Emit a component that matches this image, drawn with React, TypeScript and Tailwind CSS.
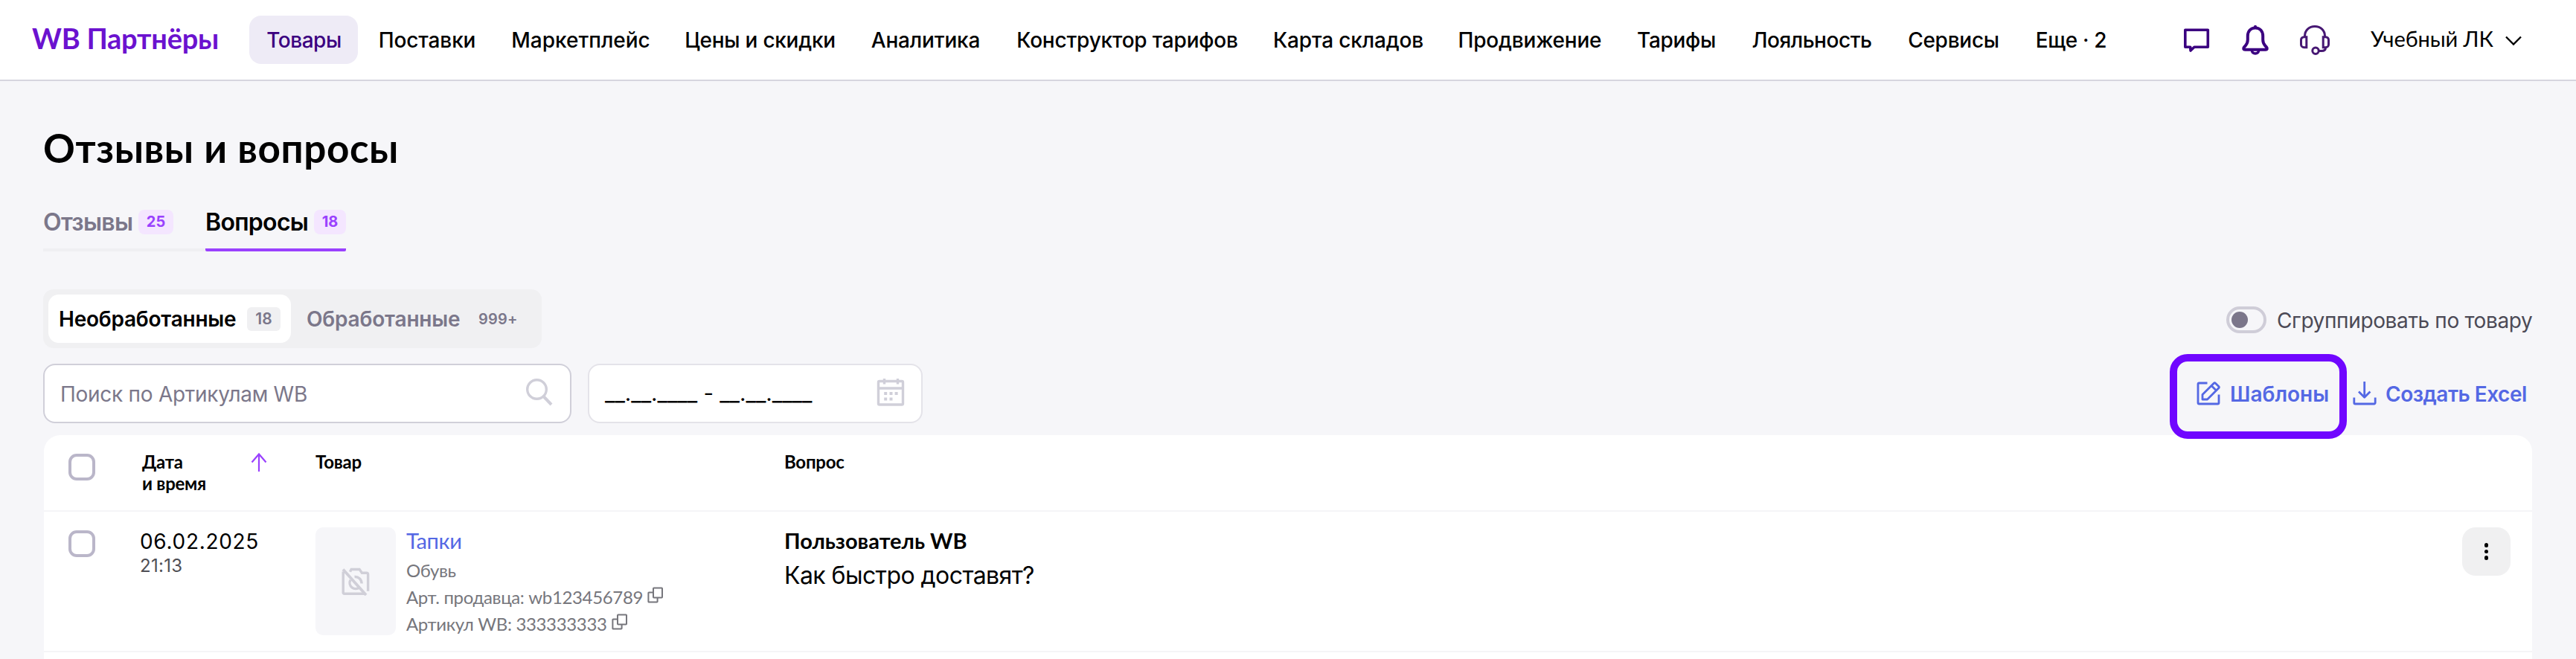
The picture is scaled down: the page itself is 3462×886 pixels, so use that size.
import React from 'react';
import clsx from 'clsx';

const NAV_ITEMS = [
  { label: 'Товары', width: 'w-[146px]', tracking: 'tracking-[-0.5px]', active: true },
  { label: 'Поставки', width: 'w-[175px]', tracking: 'tracking-[-0.1px]' },
  { label: 'Маркетплейс', width: 'w-[228px]', tracking: 'tracking-[0px]' },
  { label: 'Цены и скидки', width: 'w-[244px]', tracking: 'tracking-[-0.25px]' },
  { label: 'Аналитика', width: 'w-[191px]', tracking: 'tracking-[-0.15px]' },
  { label: 'Конструктор тарифов', width: 'w-[341px]', tracking: 'tracking-[-0.2px]' },
  { label: 'Карта складов', width: 'w-[243px]', tracking: 'tracking-[-0.15px]' },
  { label: 'Продвижение', width: 'w-[235px]', tracking: 'tracking-[-0.2px]' },
  { label: 'Тарифы', width: 'w-[149px]', tracking: 'tracking-[-0.3px]' },
  { label: 'Лояльность', width: 'w-[205px]', tracking: 'tracking-[-0.45px]' },
  { label: 'Сервисы', width: 'w-[166px]', tracking: 'tracking-[-0.25px]' },
  { label: 'Еще · 2', width: 'w-[140px]', tracking: 'tracking-[-0.3px]' },
];

const ChatIcon = () => (
  <svg width="40" height="40" viewBox="0 0 40 40" fill="none" stroke="#3b0080" strokeWidth="3.6" strokeLinejoin="round">
    <path d="M5.8 6.3h30.5v22.9H18l-5 4.8-.3-4.8H5.8z" />
  </svg>
);

const BellIcon = () => (
  <svg width="40" height="40" viewBox="0 0 40 40" fill="none" stroke="#3b0080" strokeWidth="4" strokeLinecap="round" strokeLinejoin="round">
    <path d="M20 3.4c-6.3 0-10.2 4.7-10.2 11v5.2c0 3.4-1 5.5-2.8 7.5l-2 2.3c-1.6 1.9-.9 3.3 1.2 3.3h27.6c2.1 0 2.8-1.4 1.2-3.3l-2-2.3c-1.8-2-2.8-4.1-2.8-7.5v-5.2c0-6.3-3.9-11-10.2-11z" />
    <path d="M20 1.8v1" />
    <path d="M15.3 34c.5 2.6 2.3 4 4.7 4s4.2-1.4 4.7-4" strokeWidth="3.4" />
  </svg>
);

const HeadsetIcon = () => (
  <svg width="40" height="40" viewBox="0 0 40 40" fill="none" stroke="#471873" strokeWidth="3">
    <path d="M6.5 15.5v-1C6.5 6.8 12.3 1.5 20 1.5s13.5 5.3 13.5 13v1" />
    <path d="M8.8 15.7H5.5c-2.3 0-4 1.7-4 4v6c0 2.3 1.7 4 4 4h3.3z" />
    <path d="M31.2 15.7h3.3c2.3 0 4 1.7 4 4v6c0 2.3-1.7 4-4 4h-3.3z" />
    <circle cx="21" cy="34.3" r="4.2" />
    <path d="M25.2 34.5h3.8c3.4 0 5.5-1.8 5.5-4.8" />
  </svg>
);

const CopyIcon = () => (
  <svg width="21" height="22" viewBox="0 0 21 22" fill="none" stroke="#76767c" strokeWidth="2" strokeLinejoin="round">
    <rect x="8" y="1.5" width="12" height="13" rx="0.8" />
    <path d="M8 7.5H2.2a.8.8 0 0 0-.8.8v11.4a.8.8 0 0 0 .8.8h10.6a.8.8 0 0 0 .8-.8v-5.2" />
  </svg>
);

const NoPhotoIcon = () => (
  <svg width="38" height="40" viewBox="0 0 38 40" fill="none" stroke="#d0cfd8" strokeWidth="3.4">
    <path d="M2.2 6.5v28.3a1.5 1.5 0 0 0 1.5 1.5h27.5" />
    <path d="M11.5 6.7l1.6-3.2h11l3.3 4.7h6.2c1.2 0 2 .8 2 2v22.6" />
    <path d="M2 3.5L33 38" strokeWidth="3.8" />
    <path d="M11.9 17.8a8 8 0 0 0 12.3 9.8" />
    <path d="M17.5 13.5c5.3-.5 9.3 3.2 9.7 9" />
  </svg>
);

const Checkbox = () => <span className="h-9 w-9 shrink-0 rounded-[11px] border-[4px] border-[#bab6c9] bg-white" />;

const Header = () => (
  <header className="flex h-[109px] items-center border-b-[2px] border-[#d6d5df] bg-white pl-[43px]">
    <div className="w-[292px] pb-[6px] font-[Lato] text-[38px] leading-none font-bold tracking-[-0.25px] whitespace-nowrap text-[#6b12cf]">
      WB Партнёры
    </div>
    <nav className="flex gap-[5px]">
      {NAV_ITEMS.map((item) => (
        <a
          key={item.label}
          className={clsx(
            'flex h-[65px] items-center justify-center rounded-2xl pl-px text-[28px] font-[450] whitespace-nowrap',
            item.width,
            item.tracking,
            item.active ? 'bg-[#eeebf6] text-[#3b0080]' : 'text-black',
          )}
        >
          {item.label}
        </a>
      ))}
    </nav>
    <div className="ml-auto flex items-center pr-[72px]">
      <div className="flex gap-10">
        <ChatIcon />
        <BellIcon />
        <HeadsetIcon />
      </div>
      <div className="ml-[55px] flex items-center pb-[4px]">
        <span className="w-[180px] font-[Lato] text-[29px] leading-none tracking-[-0.1px] whitespace-nowrap text-black">Учебный ЛК</span>
        <svg width="24" height="16" viewBox="0 0 24 16" fill="none" stroke="#000" strokeWidth="2.3" className="mt-[6px]">
          <path d="M2 2.5L12 12.5l10-10" />
        </svg>
      </div>
    </div>
  </header>
);

const Tabs = () => (
  <div className="mt-[46px] flex text-[32px] leading-[42px]">
    <div className="flex h-[61px] w-[218px] items-start border-b-[4px] border-[#efeff2] font-semibold text-[#7b778a]">
      <span className="w-[128px] pt-px tracking-[-0.7px]">Отзывы</span>
      <span className="mt-[5px] h-[33px] w-[47px] rounded-lg bg-[#f4e6ff] text-center text-[20px] leading-[33px] font-bold text-[#9a41fe]">25</span>
    </div>
    <div className="flex h-[61px] w-[189px] items-start rounded-b-[2px] border-b-[4px] border-[#9a41fe] font-semibold text-black">
      <span className="w-[146px] pt-px tracking-[-0.7px]">Вопросы</span>
      <span className="mt-[5px] h-[33px] w-[43px] rounded-lg bg-[#f4e6ff] text-center text-[20px] leading-[33px] font-bold text-[#9a41fe]">18</span>
    </div>
  </div>
);

const StatusFilter = () => (
  <div className="flex h-[79px] w-[670px] items-center rounded-[14px] bg-[#f0f0f2] p-[7px] text-[28px] font-semibold whitespace-nowrap">
    <div className="flex h-[65px] w-[326px] items-center rounded-[14px] bg-white pl-[14px] text-black">
      <span className="w-[253px] pt-px tracking-[-0.24px]">Необработанные</span>
      <span className="h-8 w-[45px] rounded-md bg-[#f0f0f2] text-center text-[21px] leading-8 text-[#7b778a]">18</span>
    </div>
    <div className="flex items-center pl-[21px] text-[#7b778a]">
      <span className="w-[231px] pt-px tracking-[-0.19px]">Обработанные</span>
      <span className="text-[20px] tracking-[0.2px]">999+</span>
    </div>
  </div>
);

const GroupToggle = () => (
  <div className="flex items-center pt-[3px]">
    <span className="flex h-9 w-[54px] items-center rounded-full border-[4px] border-[#cfcdd8] pl-[3px]">
      <span className="h-[22px] w-[22px] rounded-full bg-[#7b768a]" />
    </span>
    <span className="ml-[14px] w-[344px] pt-[2px] text-[28px] tracking-[-0.36px] whitespace-nowrap text-[#4c4a56]">Сгруппировать по товару</span>
  </div>
);

const Toolbar = () => (
  <div className="mt-[21px] flex h-20">
    <div className="flex w-[710px] items-center justify-between rounded-[16px] border-2 border-[#d0cfd9] bg-white pr-[22px] pl-[21px]">
      <span className="pt-[2px] text-[28px] tracking-[-0.27px] text-[#7b778a]">Поиск по Артикулам WB</span>
      <svg width="38" height="38" viewBox="0 0 38 38" fill="none" stroke="#d0cfd9" strokeWidth="3.4" className="mb-[4px]">
        <circle cx="15.5" cy="15.5" r="12.8" />
        <path d="M24.5 25l10.5 11" strokeWidth="4" />
      </svg>
    </div>
    <div className="ml-[22px] flex w-[450px] items-center justify-between rounded-[16px] border-2 border-[#e4e3e9] bg-white pr-[22px] pl-[21px]">
      <span className="text-[29.4px] whitespace-pre text-black">__.__.____ - __.__.____</span>
      <svg width="38" height="38" viewBox="0 0 38 38" fill="none" stroke="#d0cfd9" strokeWidth="3.4" className="mb-[4px]">
        <rect x="2.5" y="4.5" width="33" height="31.5" rx="1.5" />
        <path d="M2.5 14h33M10.5 1v7.5M28.5 1v7.5" />
        <path d="M10.2 21h4M17.5 21h4M24.6 21h4M10.2 28.5h4M17.5 28.5h4" strokeWidth="4" />
      </svg>
    </div>
    <div className="ml-auto flex text-[28px] font-semibold whitespace-nowrap text-[#5468e4]">
      <a className="relative flex w-[210px] items-center">
        <svg width="32" height="32" viewBox="0 0 32 32" fill="none" stroke="currentColor" strokeWidth="2.8" strokeLinejoin="round">
          <path d="M14.5 2h-11A1.5 1.5 0 0 0 2 3.5v25A1.5 1.5 0 0 0 3.5 30h25a1.5 1.5 0 0 0 1.5-1.5v-11" />
          <path d="M8 24v-6.500L23.3 2.2a1.5 1.5 0 0 1 2.1 0l4.4 4.4a1.5 1.5 0 0 1 0 2.1L14.5 24zM20 5.5l6.5 6.5" />
        </svg>
        <span className="ml-[13px] pt-[2px]">Шаблоны</span>
        {/* highlight frame */}
        <span className="absolute -top-[13px] -left-[36px] z-10 h-[114px] w-[238px] rounded-[24px] border-[10px] border-[#7006ff]" />
      </a>
      <a className="flex w-[242px] items-center">
        <svg width="32" height="32" viewBox="0 0 32 32" fill="none" stroke="currentColor" strokeWidth="2.8" strokeLinejoin="round">
          <path d="M15.7 0v21M8 13.5l7.7 7.7 7.7-7.7" />
          <path d="M1.8 21.5v7A1.5 1.5 0 0 0 3.3 30h25.4a1.5 1.5 0 0 0 1.5-1.5v-7" />
        </svg>
        <span className="ml-[12px] pt-[2px] tracking-[-0.5px]">Создать Excel</span>
      </a>
    </div>
  </div>
);

const GRID = 'grid grid-cols-[132px_233px_631px_1fr_94px] border-b-[2px] border-[#f5f5f7]';

const QuestionsTable = () => (
  <section className="mt-4 mr-px ml-px h-[320px] rounded-t-[22px] bg-white text-black">
    <div className={clsx(GRID, 'h-[103px] font-[Lato] text-[24px] leading-[29px] font-bold tracking-[-0.25px]')}>
      <div className="flex pt-[25px] pl-[33px]">
        <Checkbox />
      </div>
      <div className="flex pt-[21px]">
        <div className="w-[146px]">
          Дата
          <br />и время
        </div>
        <svg width="22" height="26" viewBox="0 0 22 26" fill="none" stroke="#9a41fe" strokeWidth="2.2" className="mt-[2px]">
          <path d="M11 26V2.5M1.5 13.5L11 2.5l9.5 11" />
        </svg>
      </div>
      <div className="pt-[21px]">Товар</div>
      <div className="-ml-px pt-[21px]">Вопрос</div>
    </div>
    <div className={clsx(GRID, 'h-[189px]')}>
      <div className="flex pt-[25px] pl-[33px]">
        <Checkbox />
      </div>
      <div className="-ml-[3px] pt-[25px]">
        <div className="text-[28px] leading-[30px] tracking-[0.7px]">06.02.2025</div>
        <div className="mt-[3px] text-[24px] leading-[30px] tracking-[0.3px] text-[#4f4f55]">21:13</div>
      </div>
      <div className="flex pt-[21px]">
        <div className="flex h-[145px] w-[108px] items-center justify-center rounded-[10px] bg-[#f6f6f9]">
          <NoPhotoIcon />
        </div>
        <div className="-mt-[1px] ml-[14px] font-[Lato] text-[24px] leading-9 tracking-[-0.35px] text-[#76767c]">
          <div className="text-[29px] leading-[38px] text-[#5468e4]">Тапки</div>
          <div className="mt-[3px]">Обувь</div>
          <div className="flex">
            Арт. продавца: wb123456789
            <span className="mt-[4px] ml-[6px]"><CopyIcon /></span>
          </div>
          <div className="flex">
            Артикул WB: 333333333
            <span className="mt-[4px] ml-[6px]"><CopyIcon /></span>
          </div>
        </div>
      </div>
      <div className="-ml-[1px] pt-[18px]">
        <div className="font-[Lato] text-[29px] leading-[42px] font-bold">Пользователь WB</div>
        <div className="mt-[3px] text-[32px] leading-[46px] tracking-[-0.57px]">Как быстро доставят?</div>
      </div>
      <div className="pt-[21px]">
        <button className="flex h-[65px] w-[65px] flex-col items-center justify-center gap-[3px] rounded-[18px] bg-[#f0f0f1]">
          <span className="h-[5.5px] w-[5.5px] rounded-full bg-black" />
          <span className="h-[5.5px] w-[5.5px] rounded-full bg-black" />
          <span className="h-[5.5px] w-[5.5px] rounded-full bg-black" />
        </button>
      </div>
    </div>
  </section>
);

export default function App() {
  return (
    <div className="h-[886px] w-[3462px] overflow-hidden bg-[#f6f6f9] font-[Inter,sans-serif]">
      <Header />
      <main className="px-[58px] pt-[58px]">
        <h1 className="font-[Lato] text-[53px] leading-[64px] font-bold tracking-[0.6px] text-black">Отзывы и вопросы</h1>
        <Tabs />
        <div className="mt-[51px] flex items-center justify-between">
          <StatusFilter />
          <GroupToggle />
        </div>
        <Toolbar />
        <QuestionsTable />
      </main>
    </div>
  );
}
